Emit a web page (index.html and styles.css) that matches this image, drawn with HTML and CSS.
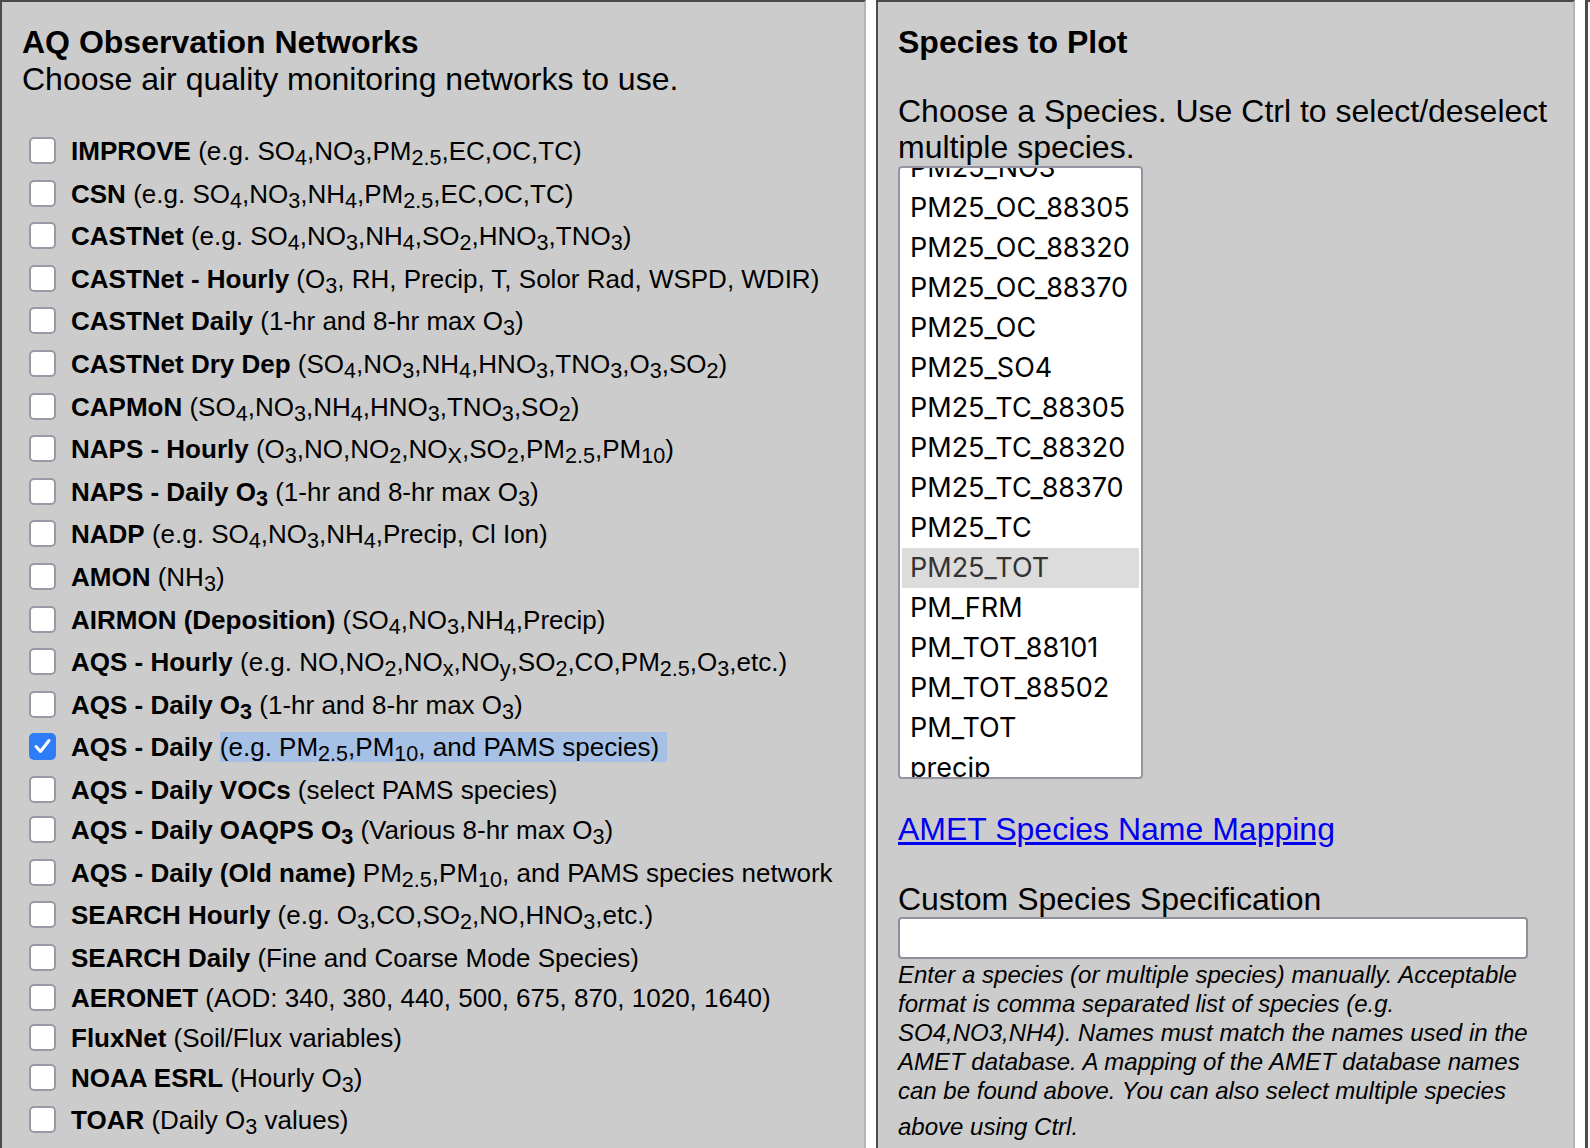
FILE: index.html
```html
<!DOCTYPE html>
<html lang="en">
<head>
    <meta charset="UTF-8">
    <title>AMET Network Selection</title>
    <link rel="stylesheet" href="styles.css">
</head>
<body>
    <div class="page">
        <div class="panel networks">
            <h2 class="panel-title">AQ Observation Networks</h2>
            <p class="intro">Choose air quality monitoring networks to use.</p>

            <div class="network-list">
                <label class="row"><span class="box"></span><span class="text"><b>IMPROVE</b> (e.g. SO<sub>4</sub>,NO<sub>3</sub>,PM<sub>2.5</sub>,EC,OC,TC)</span></label>
                <label class="row"><span class="box"></span><span class="text"><b>CSN</b> (e.g. SO<sub>4</sub>,NO<sub>3</sub>,NH<sub>4</sub>,PM<sub>2.5</sub>,EC,OC,TC)</span></label>
                <label class="row"><span class="box"></span><span class="text"><b>CASTNet</b> (e.g. SO<sub>4</sub>,NO<sub>3</sub>,NH<sub>4</sub>,SO<sub>2</sub>,HNO<sub>3</sub>,TNO<sub>3</sub>)</span></label>
                <label class="row"><span class="box"></span><span class="text"><b>CASTNet - Hourly</b> (O<sub>3</sub>, RH, Precip, T, Solor Rad, WSPD, WDIR)</span></label>
                <label class="row"><span class="box"></span><span class="text"><b>CASTNet Daily</b> (1-hr and 8-hr max O<sub>3</sub>)</span></label>
                <label class="row"><span class="box"></span><span class="text"><b>CASTNet Dry Dep</b> (SO<sub>4</sub>,NO<sub>3</sub>,NH<sub>4</sub>,HNO<sub>3</sub>,TNO<sub>3</sub>,O<sub>3</sub>,SO<sub>2</sub>)</span></label>
                <label class="row"><span class="box"></span><span class="text"><b>CAPMoN</b> (SO<sub>4</sub>,NO<sub>3</sub>,NH<sub>4</sub>,HNO<sub>3</sub>,TNO<sub>3</sub>,SO<sub>2</sub>)</span></label>
                <label class="row"><span class="box"></span><span class="text"><b>NAPS - Hourly</b> (O<sub>3</sub>,NO,NO<sub>2</sub>,NO<sub>X</sub>,SO<sub>2</sub>,PM<sub>2.5</sub>,PM<sub>10</sub>)</span></label>
                <label class="row"><span class="box"></span><span class="text"><b>NAPS - Daily O<sub>3</sub></b> (1-hr and 8-hr max O<sub>3</sub>)</span></label>
                <label class="row"><span class="box"></span><span class="text"><b>NADP</b> (e.g. SO<sub>4</sub>,NO<sub>3</sub>,NH<sub>4</sub>,Precip, Cl Ion)</span></label>
                <label class="row"><span class="box"></span><span class="text"><b>AMON</b> (NH<sub>3</sub>)</span></label>
                <label class="row"><span class="box"></span><span class="text"><b>AIRMON (Deposition)</b> (SO<sub>4</sub>,NO<sub>3</sub>,NH<sub>4</sub>,Precip)</span></label>
                <label class="row"><span class="box"></span><span class="text"><b>AQS - Hourly</b> (e.g. NO,NO<sub>2</sub>,NO<sub>x</sub>,NO<sub>y</sub>,SO<sub>2</sub>,CO,PM<sub>2.5</sub>,O<sub>3</sub>,etc.)</span></label>
                <label class="row"><span class="box"></span><span class="text"><b>AQS - Daily O<sub>3</sub></b> (1-hr and 8-hr max O<sub>3</sub>)</span></label>
                <label class="row"><span class="box checked"><svg width="27" height="27" viewBox="0 0 27 27"><polyline points="7,13.5 11.5,18.5 20,7.5" fill="none" stroke="#fff" stroke-width="3" stroke-linecap="round" stroke-linejoin="round"/></svg></span><span class="text"><b>AQS - Daily</b> <span class="selected">(e.g. PM<sub>2.5</sub>,PM<sub>10</sub>, and PAMS species)</span></span></label>
                <label class="row"><span class="box"></span><span class="text"><b>AQS - Daily VOCs</b> (select PAMS species)</span></label>
                <label class="row"><span class="box"></span><span class="text"><b>AQS - Daily OAQPS O<sub>3</sub></b> (Various 8-hr max O<sub>3</sub>)</span></label>
                <label class="row"><span class="box"></span><span class="text"><b>AQS - Daily (Old name)</b> PM<sub>2.5</sub>,PM<sub>10</sub>, and PAMS species network</span></label>
                <label class="row"><span class="box"></span><span class="text"><b>SEARCH Hourly</b> (e.g. O<sub>3</sub>,CO,SO<sub>2</sub>,NO,HNO<sub>3</sub>,etc.)</span></label>
                <label class="row"><span class="box"></span><span class="text"><b>SEARCH Daily</b> (Fine and Coarse Mode Species)</span></label>
                <label class="row"><span class="box"></span><span class="text"><b>AERONET</b> (AOD: 340, 380, 440, 500, 675, 870, 1020, 1640)</span></label>
                <label class="row"><span class="box"></span><span class="text"><b>FluxNet</b> (Soil/Flux variables)</span></label>
                <label class="row"><span class="box"></span><span class="text"><b>NOAA ESRL</b> (Hourly O<sub>3</sub>)</span></label>
                <label class="row"><span class="box"></span><span class="text"><b>TOAR</b> (Daily O<sub>3</sub> values)</span></label>
                <label class="row"><span class="box"></span><span class="text"><b>MDN</b> (Mercury Deposition)</span></label>
            </div>
        </div>

        <div class="panel species">
            <h2 class="panel-title">Species to Plot</h2>
            <p class="intro species-intro">Choose a Species. Use Ctrl to select/deselect multiple species.</p>

            <div class="listbox">
                <ul>
                    <li class="option">PM25_NO3</li>
                    <li class="option">PM25_OC_88305</li>
                    <li class="option">PM25_OC_88320</li>
                    <li class="option">PM25_OC_88370</li>
                    <li class="option">PM25_OC</li>
                    <li class="option">PM25_SO4</li>
                    <li class="option">PM25_TC_88305</li>
                    <li class="option">PM25_TC_88320</li>
                    <li class="option">PM25_TC_88370</li>
                    <li class="option">PM25_TC</li>
                    <li class="option active">PM25_TOT</li>
                    <li class="option">PM_FRM</li>
                    <li class="option">PM_TOT_88101</li>
                    <li class="option">PM_TOT_88502</li>
                    <li class="option">PM_TOT</li>
                    <li class="option">precip</li>
                    <li class="option">RH</li>
                </ul>
            </div>

            <a class="mapping" href="#">AMET Species Name Mapping</a>

            <div class="custom-label">Custom Species Specification</div>
            <input class="custom-input" type="text">
            <p class="help">Enter a species (or multiple species) manually. Acceptable format is comma separated list of species (e.g. SO4,NO3,NH4). Names must match the names used in the AMET database. A mapping of the AMET database names can be found above. You can also select multiple species <span class="last">above using Ctrl.</span></p>
        </div>

        <div class="panel next"></div>
    </div>
</body>
</html>
```

FILE: styles.css
```css
body {
    margin: 0;
    font-family: "Liberation Sans", Arial, sans-serif;
    background-color: #fff;
    color: #000;
    overflow: hidden;
}

.page {
    display: flex;
    gap: 10px;
    align-items: stretch;
}

.panel {
    box-sizing: border-box;
    background-color: #cccccc;
    border: 2px solid;
    border-color: #4b4b4b #b5b5b5 #b5b5b5 #4b4b4b;
    padding: 22px 20px 40px;
    flex: none;
}

.networks {
    width: 866px;
}

.species {
    width: 699px;
}

.next {
    width: 40px;
    background-color: #fff;
    border-left-width: 3px;
}

.panel-title {
    margin: 0;
    font-size: 32px;
    line-height: 37px;
    font-weight: bold;
}

.intro {
    margin: 0;
    font-size: 32px;
    line-height: 36px;
}

/* networks */

.network-list {
    margin-top: 34px;
}

.row {
    display: flex;
    align-items: flex-start;
    padding: 5px 0 5px 7px;
    font-size: 26px;
    line-height: 30px;
    white-space: nowrap;
}

.box {
    box-sizing: border-box;
    flex: none;
    width: 27px;
    height: 27px;
    margin: 1px 15px 0 0;
    border: 2px solid #9a99a8;
    border-radius: 5px;
    background-color: #fff;
}

.box.checked {
    border: none;
    background-color: #2f7df6;
}

.box svg {
    display: block;
}

sub {
    font-size: 0.83em;
    line-height: 21.6px;
    vertical-align: -5px;
}

.selected {
    background-color: #a6c1e5;
    padding-right: 8px;
}

/* species */

.species-intro {
    margin-top: 32px;
}

.listbox {
    box-sizing: border-box;
    width: 245px;
    height: 613px;
    margin-top: 1px;
    padding: 0 2px;
    border: 2px solid #9594a3;
    border-radius: 4px;
    background-color: #fff;
    overflow: hidden;
}

.listbox ul {
    list-style: none;
    margin: -20px 0 0;
    padding: 0;
}

.option {
    height: 40px;
    line-height: 40px;
    padding-left: 8px;
    font-family: Inter, "Liberation Sans", sans-serif;
    font-size: 27px;
}

.option.active {
    background-color: #dcdcdc;
    color: #333;
}

.mapping {
    display: inline-block;
    margin-top: 32px;
    font-size: 32px;
    line-height: 36px;
    color: #0000ee;
}

.custom-label {
    margin-top: 34px;
    font-size: 32px;
    line-height: 36px;
}

.custom-input {
    display: block;
    box-sizing: border-box;
    width: 630px;
    height: 42px;
    margin: 0;
    border: 2px solid #8f8e9c;
    border-radius: 4px;
    background-color: #fff;
}

.help {
    width: 630px;
    margin: 1px 0 0;
    font-size: 24px;
    line-height: 29px;
    font-style: italic;
}

.help .last {
    display: inline-block;
    margin-top: 7px;
}
```
